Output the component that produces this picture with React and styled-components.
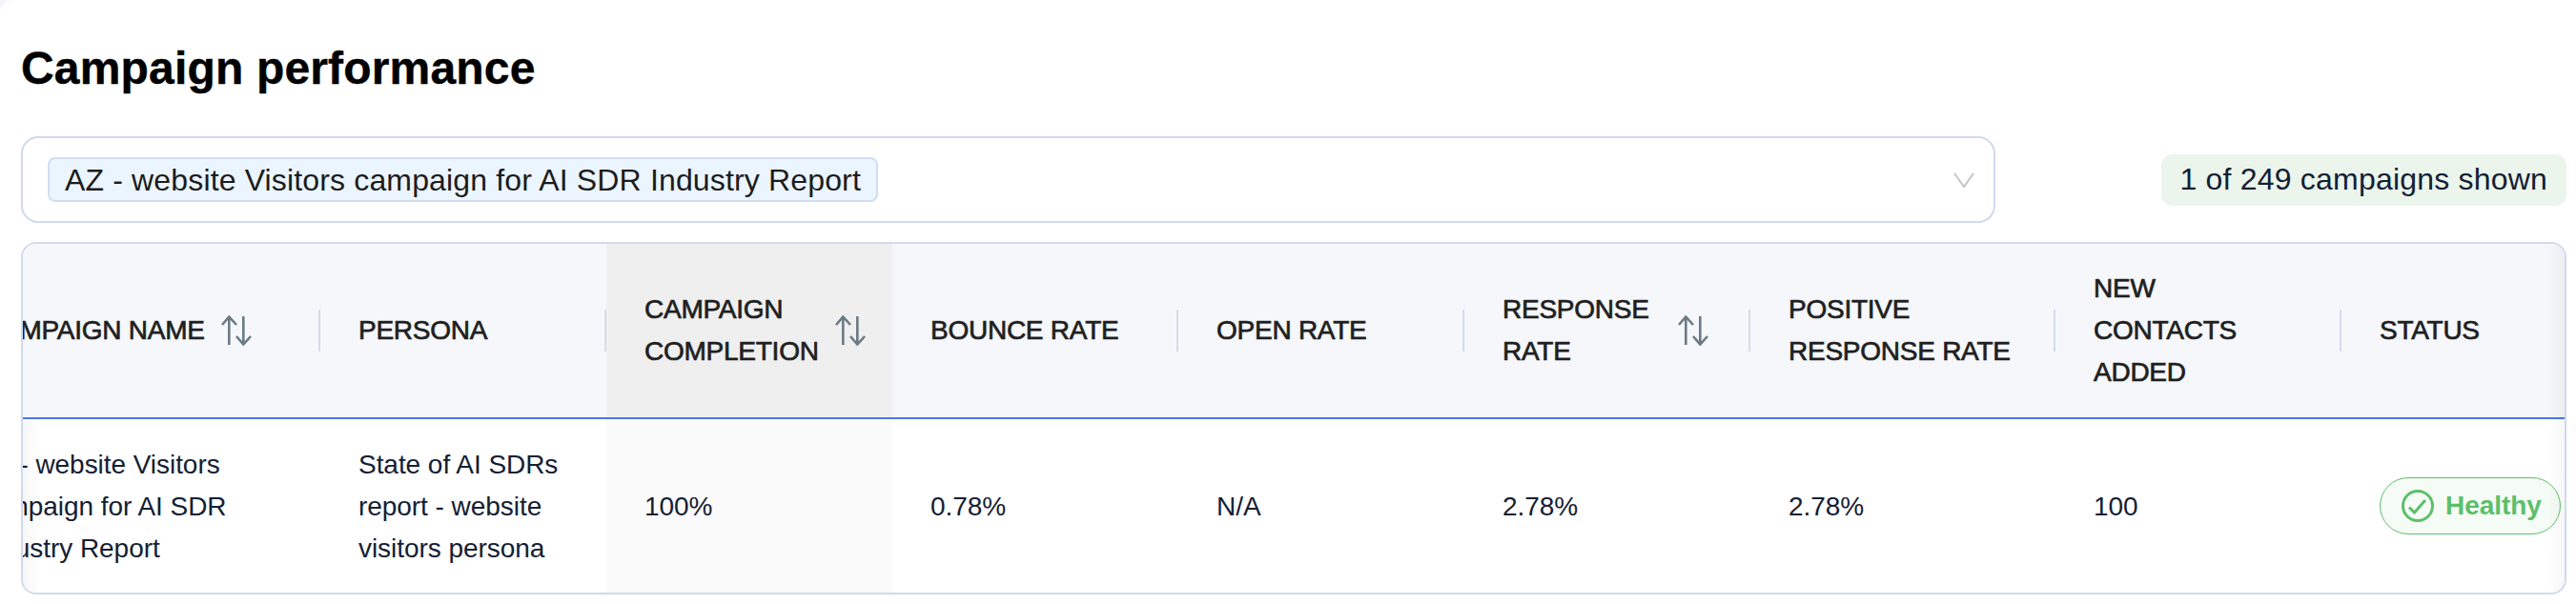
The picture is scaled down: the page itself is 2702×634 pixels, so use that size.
import React, { useLayoutEffect, useRef } from "react";
import styled, { createGlobalStyle } from "styled-components";

const GlobalStyle = createGlobalStyle`
  html, body {
    margin: 0;
    background: #f3f5fb;
    font-family: "Liberation Sans", Arial, sans-serif;
  }
`;

const Page = styled.div`
  box-sizing: border-box;
  width: 2702px;
  height: 634px;
  padding: 43px 10px 0 22px;
  overflow: hidden;
  background: #fff;
  border-top-left-radius: 14px;
`;

const Title = styled.h1`
  margin: 0 0 42px;
  font-size: 48px;
  line-height: 58px;
  font-weight: 700;
  letter-spacing: 0.17px;
  -webkit-text-stroke: 0.4px #000;
  color: #000;
`;

const Toolbar = styled.div`
  display: flex;
  align-items: center;
  justify-content: space-between;
  margin-bottom: 20px;
`;

const Select = styled.div`
  box-sizing: border-box;
  width: 2071px;
  height: 91px;
  padding: 0 20px 0 26px;
  display: flex;
  align-items: center;
  justify-content: space-between;
  border: 2px solid #d0d9ee;
  border-radius: 18px;
`;

const Chip = styled.span`
  box-sizing: border-box;
  height: 47px;
  padding: 2px 16px 0;
  display: flex;
  align-items: center;
  font-size: 32px;
  letter-spacing: 0.15px;
  color: #1c1c1c;
  background: #ebf5ff;
  border: 2px solid #d3dcf0;
  border-radius: 8px;
`;

const Chevron = styled.svg`
  width: 22px;
  height: 16px;
  fill: none;
  stroke: #c4c4c4;
  stroke-width: 2;
`;

const CountBadge = styled.div`
  height: 54px;
  padding: 0 20px;
  display: flex;
  align-items: center;
  font-size: 32px;
  letter-spacing: 0.2px;
  color: #142033;
  background: #ebf5ec;
  border-radius: 12px;
`;

const TableCard = styled.div`
  position: relative;
  box-sizing: border-box;
  height: 370px;
  border: 2px solid #d0d9ee;
  border-radius: 16px;
  overflow: hidden;

  &::before,
  &::after {
    content: "";
    position: absolute;
    top: 0;
    bottom: 0;
    width: 18px;
    pointer-events: none;
  }
  &::before {
    left: 0;
    background: linear-gradient(to right, rgba(0, 0, 0, 0.035), rgba(0, 0, 0, 0));
  }
  &::after {
    right: 0;
    background: linear-gradient(to left, rgba(0, 0, 0, 0.035), rgba(0, 0, 0, 0));
  }
`;

const Scroller = styled.div`
  overflow-x: auto;
  scrollbar-width: none;
`;

const Table = styled.table`
  table-layout: fixed;
  width: 2753px;
  border-collapse: separate;
  border-spacing: 0;
`;

const HeadCell = styled.th`
  position: relative;
  box-sizing: border-box;
  height: 184px;
  padding: 0 ${(p) => (p.$flush ? "0" : "44px")} 0 40px;
  text-align: left;
  font-size: 28px;
  line-height: 44px;
  font-weight: 400;
  letter-spacing: -0.25px;
  -webkit-text-stroke: 0.7px #1f1f1f;
  color: #1f1f1f;
  background: ${(p) => (p.$active ? "#efefef" : "#f5f7fb")};
  border-bottom: 2px solid #4a78ea;

  &:first-child {
    padding-left: 45px;
  }

  &::after {
    content: "";
    display: ${(p) => (p.$active || p.$flush ? "none" : "block")};
    position: absolute;
    top: 69px;
    right: 0;
    width: 2px;
    height: 44px;
    background: #d5dcec;
  }
`;

const HeadInner = styled.div`
  display: flex;
  align-items: center;
  gap: 17px;
`;

const SortIcon = styled.svg`
  flex: none;
  width: 32px;
  height: 32px;
  fill: none;
  stroke: #6b7a85;
  stroke-width: 2.6;
`;

const BodyCell = styled.td`
  box-sizing: border-box;
  height: 182px;
  padding: 2px ${(p) => (p.$flush ? "0" : "40px")} 0 40px;
  font-size: 28px;
  line-height: 44px;
  letter-spacing: -0.05px;
  color: #142033;
  background: ${(p) => (p.$active ? "#fafafa" : "#fff")};
`;

const StatusPill = styled.span`
  box-sizing: border-box;
  width: 190px;
  height: 60px;
  margin-top: -2px;
  padding-left: 22px;
  display: flex;
  align-items: center;
  gap: 12px;
  font-size: 28px;
  font-weight: 700;
  color: #5cbf6a;
  background: #f5fbf5;
  border: 1.5px solid #5cbf6a;
  border-radius: 30px;
`;

const CheckIcon = styled.svg`
  flex: none;
  width: 34px;
  height: 34px;
  fill: none;
  stroke: #5cbf6a;
  stroke-width: 3;
`;

const columns = [
  { key: "name", label: "CAMPAIGN NAME", width: 399, sortable: true },
  { key: "persona", label: "PERSONA", width: 300 },
  { key: "completion", label: "CAMPAIGN COMPLETION", width: 300, sortable: true, active: true },
  { key: "bounce", label: "BOUNCE RATE", width: 300 },
  { key: "open", label: "OPEN RATE", width: 300 },
  { key: "response", label: "RESPONSE RATE", width: 300, sortable: true },
  { key: "positive", label: "POSITIVE RESPONSE RATE", width: 320 },
  { key: "contacts", label: "NEW CONTACTS ADDED", width: 300 },
  { key: "status", label: "STATUS", width: 234, flush: true },
];

const row = {
  name: "AZ - website Visitors campaign for AI SDR Industry Report",
  persona: "State of AI SDRs report - website visitors persona",
  completion: "100%",
  bounce: "0.78%",
  open: "N/A",
  response: "2.78%",
  positive: "2.78%",
  contacts: "100",
};

const Sort = () => (
  <SortIcon viewBox="0 0 32 32">
    <path d="M8.3 31V1.5M1 10l7.3-8.5L16 10" />
    <path d="M23.3 1v29.5M16 22l7.3 8.5L31 22" />
  </SortIcon>
);

const App = () => {
  const scroller = useRef(null);

  // the reference is photographed scrolled all the way to the right
  useLayoutEffect(() => {
    scroller.current.scrollLeft = scroller.current.scrollWidth;
  }, []);

  return (
    <Page>
      <GlobalStyle />
      <Title>Campaign performance</Title>
      <Toolbar>
        <Select>
          <Chip>AZ - website Visitors campaign for AI SDR Industry Report</Chip>
          <Chevron viewBox="0 0 22 16">
            <path d="M1 1l10 14L21 1" />
          </Chevron>
        </Select>
        <CountBadge>1 of 249 campaigns shown</CountBadge>
      </Toolbar>
      <TableCard>
        <Scroller ref={scroller}>
          <Table>
            <colgroup>
              {columns.map((c) => (
                <col key={c.key} width={c.width} />
              ))}
            </colgroup>
            <thead>
              <tr>
                {columns.map((c) => (
                  <HeadCell key={c.key} $active={c.active} $flush={c.flush}>
                    <HeadInner>
                      <span>{c.label}</span>
                      {c.sortable && <Sort />}
                    </HeadInner>
                  </HeadCell>
                ))}
              </tr>
            </thead>
            <tbody>
              <tr>
                {columns.map((c) => (
                  <BodyCell key={c.key} $active={c.active} $flush={c.flush}>
                    {c.key === "status" ? (
                      <StatusPill>
                        <CheckIcon viewBox="0 0 34 34">
                          <circle cx="17" cy="17" r="15.5" />
                          <path d="M8 18.5l5.5 5.5L25 11" />
                        </CheckIcon>
                        Healthy
                      </StatusPill>
                    ) : (
                      row[c.key]
                    )}
                  </BodyCell>
                ))}
              </tr>
            </tbody>
          </Table>
        </Scroller>
      </TableCard>
    </Page>
  );
};

export default App;
